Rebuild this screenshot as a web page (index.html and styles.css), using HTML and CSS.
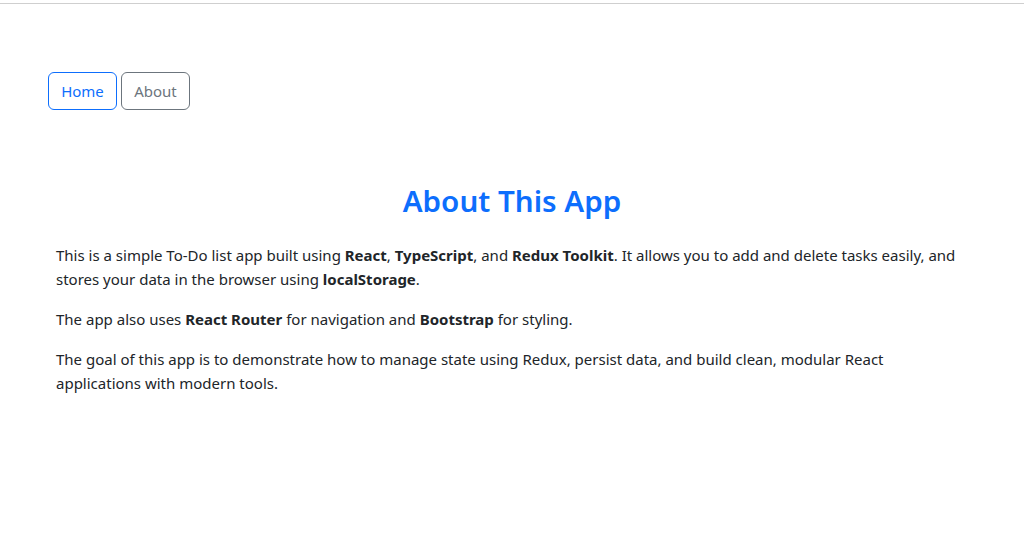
FILE: index.html
```html
<!DOCTYPE html>
<html lang="en">
<head>
<meta charset="utf-8">
<title>About This App</title>
<link rel="stylesheet" href="styles.css">
</head>
<body>
<div class="topline"></div>
<nav class="nav">
  <a class="btn btn-home" href="#">Home</a>
  <a class="btn btn-about" href="#">About</a>
</nav>
<main class="content">
  <h2 class="title">About This App</h2>
  <p>This is a simple To-Do list app built using <strong>React</strong>, <strong>TypeScript</strong>, and <strong>Redux Toolkit</strong>. It allows you to add and delete tasks easily, and stores your data in the browser using <strong>localStorage</strong>.</p>
  <p>The app also uses <strong>React Router</strong> for navigation and <strong>Bootstrap</strong> for styling.</p>
  <p>The goal of this app is to demonstrate how to manage state using Redux, persist data, and build clean, modular React applications with modern tools.</p>
</main>
</body>
</html>
```
FILE: styles.css
```css
* { box-sizing: border-box; }
html, body { margin: 0; padding: 0; background: #fff; }
body {
  font-family: "Noto Sans", "Open Sans", sans-serif;
  font-size: 15px;
  line-height: 24px;
  color: #212529;
}
.topline {
  margin-top: 3px;
  border-top: 1px solid #cfcfcf;
}
.nav {
  display: flex;
  gap: 4px;
  padding: 0 0 0 48px;
  margin-top: 68px;
}
.btn {
  display: inline-block;
  padding: 6px 0;
  border: 1px solid;
  border-radius: 6px;
  font-size: 15px;
  line-height: 24px;
  text-decoration: none;
  width: 69px;
  text-align: center;
}
.btn-home { color: #0d6efd; border-color: #0d6efd; }
.btn-about { color: #6c757d; border-color: #6c757d; }
.content {
  padding: 0 56px;
  margin-top: 73px;
}
.title {
  margin: 0 0 24px;
  text-align: center;
  color: #0d6efd;
  font-size: 29.6px;
  font-weight: 600;
  line-height: 36px;
}
p { margin: 0 0 16px; }
strong { font-weight: 700; }
```
